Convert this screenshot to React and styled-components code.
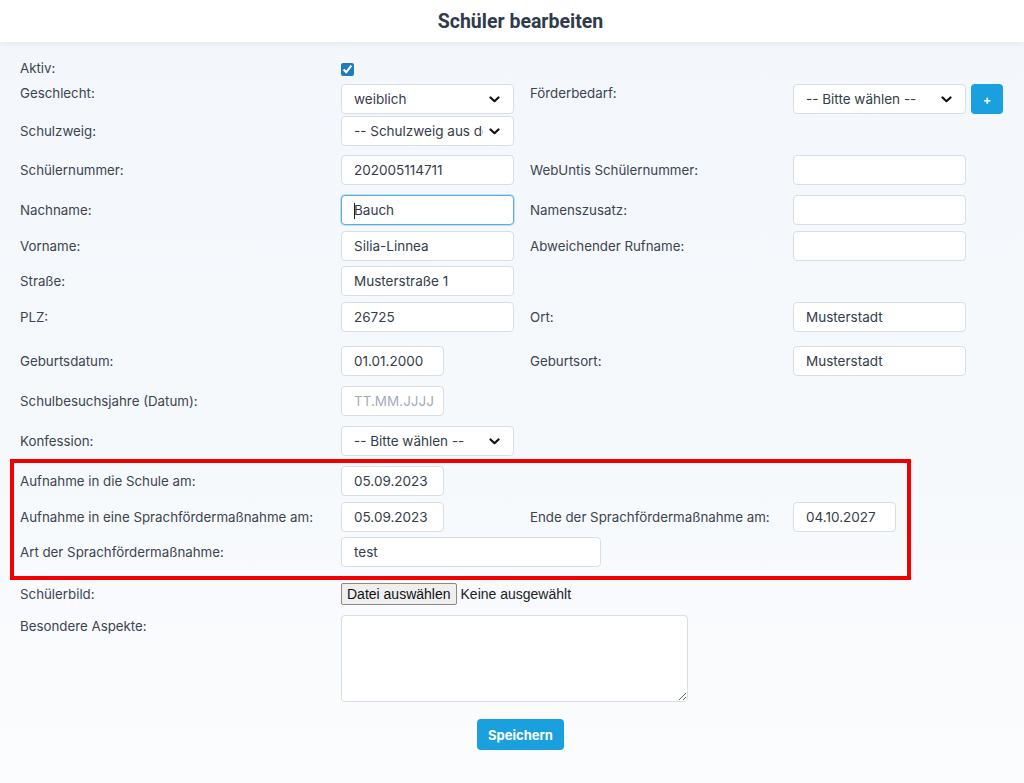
import styled, { createGlobalStyle } from 'styled-components';

const GlobalStyle = createGlobalStyle`
  html, body {
    margin: 0;
    padding: 0;
  }
  body {
    font-family: Inter, "Noto Sans", sans-serif;
    background: linear-gradient(180deg, #f3f7fb 0%, #f6f9fc 60%, #fbfcfe 100%);
    min-height: 783px;
    color: #3b4451;
  }
`;

const Header = styled.header`
  height: 42px;
  background: #fff;
  box-shadow: 0 2px 6px rgba(40, 60, 90, 0.08);
  display: flex;
  align-items: center;
  justify-content: center;
  padding-left: 17px;
`;

const Title = styled.h1`
  margin: 0;
  font-family: Roboto, "Liberation Sans", sans-serif;
  font-size: 19.5px;
  font-weight: 700;
  color: #2f3b4c;
`;

const Form = styled.form`
  padding: 17px 0 0 20px;
`;

const Row = styled.div`
  display: grid;
  grid-template-columns: 321px 189px 263px 1fr;
  align-items: ${p => (p.$top ? 'start' : 'center')};
  margin-top: ${p => p.$mt || 0}px;
`;

const Label = styled.label`
  font-size: 13.3px;
  line-height: 18px;
  color: #3c4450;
  padding-top: ${p => p.$pt || 0}px;
`;

const Check = styled.input`
  display: block;
  margin: 4px 0 0 0;
  width: 13px;
  height: 13px;
  accent-color: #1f7cc0;
`;

const Field = styled.div`
  box-sizing: border-box;
  width: ${p => p.$w}px;
  height: 30px;
  background: #fff;
  border: 1px solid ${p => (p.$focus ? '#5aaee3' : '#d7dee7')};
  box-shadow: ${p => (p.$focus ? '0 0 0 1px rgba(90,174,227,0.35)' : 'none')};
  border-radius: 4px;
  padding: 0 12px;
  display: flex;
  align-items: center;
  font-size: 13.5px;
  color: ${p => (p.$placeholder ? '#a3acb8' : '#343d49')};
  white-space: nowrap;
  overflow: hidden;
  position: relative;
`;

const SelectText = styled.span`
  flex: 1;
  min-width: 0;
  overflow: hidden;
  white-space: nowrap;
  text-overflow: clip;
`;

const Chevron = styled.svg`
  flex: none;
  width: 11px;
  height: 7px;
  margin-left: 6px;
  margin-right: 1px;
`;

const Caret = styled.span`
  position: absolute;
  left: 12px;
  top: 7px;
  width: 1px;
  height: 16px;
  background: #222;
`;

const Inline = styled.div`
  display: flex;
  gap: 5px;
`;

const PlusButton = styled.button`
  width: 32px;
  height: 30px;
  border: none;
  border-radius: 4px;
  background: #1a9fdf;
  color: #fff;
  font-family: Inter, sans-serif;
  font-size: 12px;
  font-weight: 700;
  padding: 0;
`;

const Marked = styled.div`
  box-sizing: border-box;
  width: 901px;
  margin: 3px 0 0 -10px;
  border: 4px solid #f00000;
  padding: 3px 0 9px 6px;
`;

const FileRow = styled.div`
  grid-column: 2 / 4;
  display: flex;
  align-items: center;
  gap: 4px;
  font-family: "Liberation Sans", Arial, sans-serif;
  font-size: 14px;
  color: #222;
`;

const FileButton = styled.button`
  height: 22px;
  padding: 0 5px;
  font-family: "Liberation Sans", Arial, sans-serif;
  font-size: 14px;
  color: #111;
  background: #efefef;
  border: 1px solid #8a8a8a;
  border-radius: 2px;
`;

const AreaCell = styled.div`
  grid-column: 2 / 4;
`;

const TextArea = styled.textarea`
  box-sizing: border-box;
  width: 347px;
  height: 87px;
  border: 1px solid #d7dee7;
  border-radius: 4px;
  background: #fff;
  display: block;
`;

const Footer = styled.div`
  display: flex;
  justify-content: center;
  padding-right: 3px;
  margin-top: 17px;
`;

const SaveButton = styled.button`
  width: 87px;
  height: 31px;
  border: none;
  border-radius: 4px;
  background: #1aa0dd;
  color: #fff;
  font-family: Inter, sans-serif;
  font-size: 13px;
  font-weight: 700;
`;

function Select({ w, children }) {
  return (
    <Field $w={w}>
      <SelectText>{children}</SelectText>
      <Chevron viewBox="0 0 11 7">
        <polyline points="1.5,1.5 5.5,5.2 9.5,1.5" fill="none" stroke="#111" strokeWidth="2.2" strokeLinecap="round" strokeLinejoin="round" />
      </Chevron>
    </Field>
  );
}

export default function App() {
  return (
    <>
      <GlobalStyle />
      <Header>
        <Title>Schüler bearbeiten</Title>
      </Header>
      <Form onSubmit={e => e.preventDefault()}>
        <Row $top>
          <Label>Aktiv:</Label>
          <div><Check type="checkbox" defaultChecked /></div>
        </Row>
        <Row $top $mt={7}>
          <Label>Geschlecht:</Label>
          <Select w={173}>weiblich</Select>
          <Label>Förderbedarf:</Label>
          <Inline>
            <Select w={173}>-- Bitte wählen --</Select>
            <PlusButton type="button">+</PlusButton>
          </Inline>
        </Row>
        <Row $mt={2}>
          <Label>Schulzweig:</Label>
          <Select w={173}>-- Schulzweig aus der Liste</Select>
        </Row>
        <Row $mt={9}>
          <Label>Schülernummer:</Label>
          <Field $w={173}>202005114711</Field>
          <Label>WebUntis Schülernummer:</Label>
          <Field $w={173} />
        </Row>
        <Row $mt={10}>
          <Label>Nachname:</Label>
          <Field $w={173} $focus><Caret />Bauch</Field>
          <Label>Namenszusatz:</Label>
          <Field $w={173} />
        </Row>
        <Row $mt={6}>
          <Label>Vorname:</Label>
          <Field $w={173}>Silia-Linnea</Field>
          <Label>Abweichender Rufname:</Label>
          <Field $w={173} />
        </Row>
        <Row $mt={5}>
          <Label>Straße:</Label>
          <Field $w={173}>Musterstraße 1</Field>
        </Row>
        <Row $mt={6}>
          <Label>PLZ:</Label>
          <Field $w={173}>26725</Field>
          <Label>Ort:</Label>
          <Field $w={173}>Musterstadt</Field>
        </Row>
        <Row $mt={14}>
          <Label>Geburtsdatum:</Label>
          <Field $w={103}>01.01.2000</Field>
          <Label>Geburtsort:</Label>
          <Field $w={173}>Musterstadt</Field>
        </Row>
        <Row $mt={10}>
          <Label>Schulbesuchsjahre (Datum):</Label>
          <Field $w={103} $placeholder>TT.MM.JJJJ</Field>
        </Row>
        <Row $mt={10}>
          <Label>Konfession:</Label>
          <Select w={173}>-- Bitte wählen --</Select>
        </Row>
        <Marked>
          <Row>
            <Label>Aufnahme in die Schule am:</Label>
            <Field $w={103}>05.09.2023</Field>
          </Row>
          <Row $mt={6}>
            <Label>Aufnahme in eine Sprachfördermaßnahme am:</Label>
            <Field $w={103}>05.09.2023</Field>
            <Label>Ende der Sprachfördermaßnahme am:</Label>
            <Field $w={103}>04.10.2027</Field>
          </Row>
          <Row $mt={5}>
            <Label>Art der Sprachfördermaßnahme:</Label>
            <Field $w={260}>test</Field>
          </Row>
        </Marked>
        <Row $mt={3}>
          <Label>Schülerbild:</Label>
          <FileRow>
            <FileButton type="button">Datei auswählen</FileButton>
            <span>Keine ausgewählt</span>
          </FileRow>
        </Row>
        <Row $top $mt={10}>
          <Label $pt={2}>Besondere Aspekte:</Label>
          <AreaCell><TextArea /></AreaCell>
        </Row>
        <Footer>
          <SaveButton type="submit">Speichern</SaveButton>
        </Footer>
      </Form>
    </>
  );
}
